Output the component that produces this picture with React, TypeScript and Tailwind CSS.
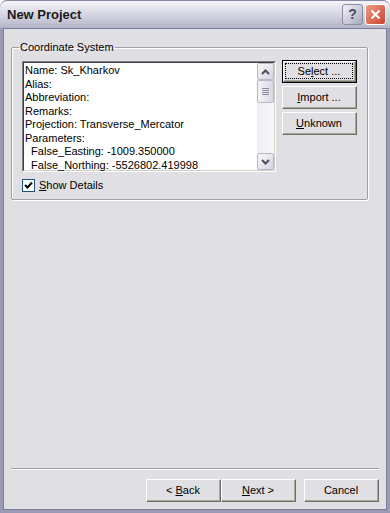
import { ReactNode } from 'react'

const font = { fontFamily: '"Liberation Sans", Arial, sans-serif' }

function ClassicButton({
  children,
  isDefault = false,
  className = '',
}: {
  children: ReactNode
  isDefault?: boolean
  className?: string
}) {
  return (
    <div
      className={`flex h-[23px] items-stretch bg-[#e0dfe3] ${
        isDefault ? 'border border-black' : ''
      } ${className}`}
    >
      <div className="flex flex-1 border-t border-l border-t-white border-l-white border-r border-b border-r-[#716f64] border-b-[#716f64]">
        <div
          className={`flex flex-1 items-center justify-center border-r border-b border-r-[#aca899] border-b-[#aca899] ${
            isDefault ? 'p-[2px]' : ''
          }`}
        >
          <div
            className={`flex h-full w-full items-center justify-center text-[11px] text-black ${
              isDefault ? 'outline-1 outline-dotted outline-black' : ''
            }`}
          >
            {children}
          </div>
        </div>
      </div>
    </div>
  )
}

function ScrollArrow({ up }: { up?: boolean }) {
  return (
    <div className="flex h-[17px] w-[17px] items-center justify-center rounded-[2px] border border-[#b8b8c8] bg-gradient-to-br from-[#fafafc] to-[#d4d4de]">
      <svg width="9" height="6" viewBox="0 0 9 6">
        <path
          d={up ? 'M1 5 L4.5 1.5 L8 5' : 'M1 1 L4.5 4.5 L8 1'}
          stroke="#4d4d63"
          strokeWidth="2"
          fill="none"
        />
      </svg>
    </div>
  )
}

export default function App() {
  const lines = [
    'Name: Sk_Kharkov',
    'Alias:',
    'Abbreviation:',
    'Remarks:',
    'Projection: Transverse_Mercator',
    'Parameters:',
    '  False_Easting: -1009.350000',
    '  False_Northing: -5526802.419998',
  ]

  return (
    <div
      className="flex h-[513px] w-[390px] flex-col overflow-hidden rounded-t-[7px] bg-[#9a9ab4]"
      style={font}
    >
      {/* title bar */}
      <div className="flex h-[28px] items-center rounded-t-[7px] border-t border-[#8a8aa6] bg-gradient-to-b from-[#f4f4f8] via-[#d6d6e2] to-[#b4b4c8] pr-[4px] pl-[7px]">
        <span className="flex-1 text-[13px] font-bold text-[#1a1a1a]">New Project</span>
        <div className="flex gap-[2px]">
          <div className="flex h-[21px] w-[21px] items-center justify-center rounded-[3px] border border-[#8c8ca4] bg-gradient-to-br from-[#f4f4fa] to-[#a9a9c0] text-[14px] font-bold text-[#4a4a60]">
            ?
          </div>
          <div className="flex h-[21px] w-[21px] items-center justify-center rounded-[3px] border border-[#ffffff] bg-gradient-to-br from-[#f09a84] to-[#c8412a]">
            <svg width="11" height="11" viewBox="0 0 11 11">
              <path d="M1.5 1.5 L9.5 9.5 M9.5 1.5 L1.5 9.5" stroke="white" strokeWidth="2.2" />
            </svg>
          </div>
        </div>
      </div>

      {/* client area */}
      <div className="mx-[3px] mb-[3px] flex flex-1 flex-col border border-[#7e7e9c] bg-[#e0dfe3] text-[11px] text-black">
        <div className="flex-1 px-[7px] pt-[12px]">
          <fieldset className="mr-[14px] h-[159px] rounded-[2px] border border-[#a0a0a4] px-[10px] shadow-[inset_1px_1px_0_#fff,1px_1px_0_#fff]">
            <legend className="ml-[-3px] px-[1px] text-[11px] leading-[13px]">Coordinate System</legend>
            <div className="mt-[7px] flex gap-[6px]">
              <div className="flex h-[111px] w-[254px] border border-t-[#808080] border-l-[#808080] border-r-white border-b-white">
                <div className="flex flex-1 border border-t-[#404040] border-l-[#404040] border-r-[#d4d0c8] border-b-[#d4d0c8]">
                  <div className="flex-1 bg-white px-[1px] pt-[1px] leading-[13.5px] whitespace-pre">
                    {lines.map((line) => (
                      <div key={line}>{line}</div>
                    ))}
                  </div>
                  <div className="flex w-[17px] flex-col bg-[#f1f1f5]">
                    <ScrollArrow up />
                    <div className="flex h-[23px] w-[17px] items-center justify-center rounded-[2px] border border-[#b8b8c8] bg-gradient-to-r from-[#f4f4f8] to-[#d8d8e2]">
                      <div className="flex flex-col gap-[1px]">
                        {[0, 1, 2, 3].map((i) => (
                          <div key={i} className="h-[1px] w-[7px] bg-[#8c8ca0]" />
                        ))}
                      </div>
                    </div>
                    <div className="flex-1 bg-gradient-to-r from-[#eeeef4] to-[#f8f8fb]" />
                    <ScrollArrow />
                  </div>
                </div>
              </div>
              <div className="-mt-[1px] flex w-[75px] flex-col gap-[3px]">
                <ClassicButton isDefault>
                  Se<span className="underline">l</span>ect ...
                </ClassicButton>
                <ClassicButton>
                  <span className="underline">I</span>mport ...
                </ClassicButton>
                <ClassicButton>
                  <span className="underline">U</span>nknown
                </ClassicButton>
              </div>
            </div>
            <label className="mt-[5px] flex items-center gap-[4px]">
              <span className="flex h-[13px] w-[13px] items-center justify-center border border-[#1c5180] bg-white">
                <svg width="9" height="9" viewBox="0 0 9 9">
                  <path d="M1 4 L3.5 6.5 L8 1.5" stroke="black" strokeWidth="2" fill="none" />
                </svg>
              </span>
              <span>
                <span className="underline">S</span>how Details
              </span>
            </label>
          </fieldset>
        </div>

        <div className="mx-[7px] h-[2px] border-t border-b border-t-[#a0a0a4] border-b-white" />

        <div className="flex justify-end px-[7px] pt-[9px] pb-[7px]">
          <ClassicButton className="w-[75px]">
            &lt; <span className="ml-[3px] underline">B</span>ack
          </ClassicButton>
          <ClassicButton className="w-[75px]">
            <span className="underline">N</span>ext &gt;
          </ClassicButton>
          <ClassicButton className="ml-[8px] w-[75px]">Cancel</ClassicButton>
        </div>
      </div>
    </div>
  )
}
